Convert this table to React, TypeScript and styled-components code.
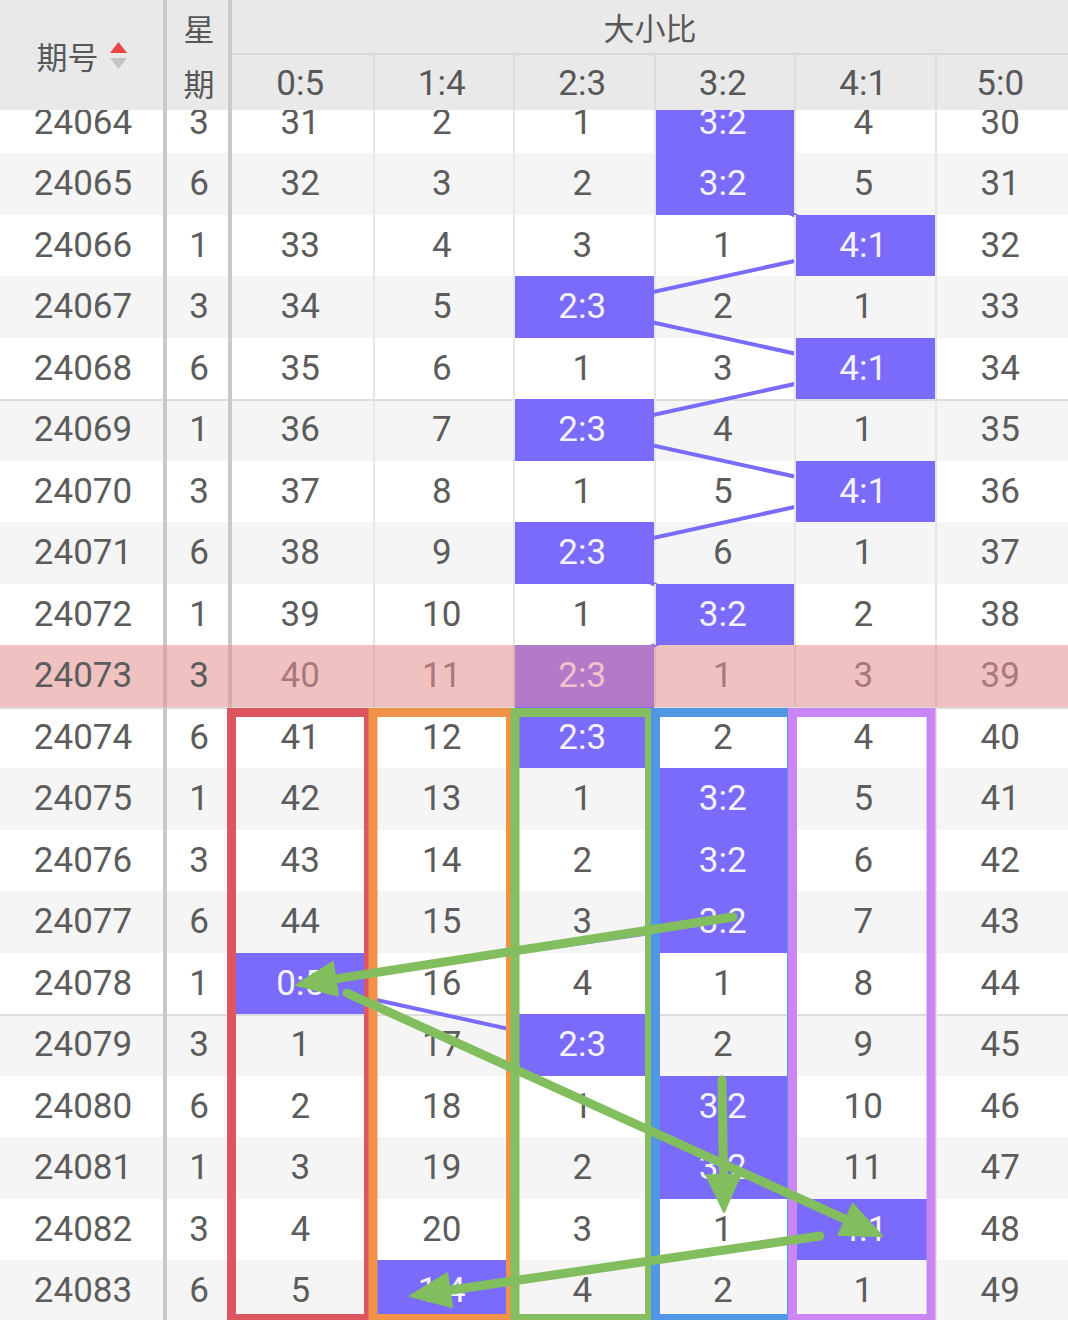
import React from 'react';
import styled, { createGlobalStyle } from 'styled-components';

const ROW_H = 61.5;
const COL_W = 140.5;
const DATA_X = 232;
const LABELS = ['0:5', '1:4', '2:3', '3:2', '4:1', '5:0'];

// issue, weekday, six cells ("*" marks the hit column)
const RAW: [string, number, string][] = [
  ['24064', 3, '31 2 1 * 4 30'],
  ['24065', 6, '32 3 2 * 5 31'],
  ['24066', 1, '33 4 3 1 * 32'],
  ['24067', 3, '34 5 * 2 1 33'],
  ['24068', 6, '35 6 1 3 * 34'],
  ['24069', 1, '36 7 * 4 1 35'],
  ['24070', 3, '37 8 1 5 * 36'],
  ['24071', 6, '38 9 * 6 1 37'],
  ['24072', 1, '39 10 1 * 2 38'],
  ['24073', 3, '40 11 * 1 3 39'],
  ['24074', 6, '41 12 * 2 4 40'],
  ['24075', 1, '42 13 1 * 5 41'],
  ['24076', 3, '43 14 2 * 6 42'],
  ['24077', 6, '44 15 3 * 7 43'],
  ['24078', 1, '* 16 4 1 8 44'],
  ['24079', 3, '1 17 * 2 9 45'],
  ['24080', 6, '2 18 1 * 10 46'],
  ['24081', 1, '3 19 2 * 11 47'],
  ['24082', 3, '4 20 3 1 * 48'],
  ['24083', 6, '5 * 4 2 1 49'],
];

const ROWS = RAW.map(([issue, week, cells]) => {
  const values = cells.split(' ');
  return { issue, week, values, hit: values.indexOf('*') };
});

const PINK_ISSUE = '24073';

const GlobalStyle = createGlobalStyle`
  *, *::before, *::after { box-sizing: border-box; }
  html, body { margin: 0; padding: 0; background: #ffffff; }
  body { font-family: Roboto, "Noto Sans CJK SC", sans-serif; }
`;

const Page = styled.div`
  position: relative;
  width: 1068px;
  height: 1320px;
  overflow: hidden;
  background: #ffffff;
  color: #5c5c5c;
  font-family: Roboto, "Noto Sans CJK SC", sans-serif;
`;

/* ---------- header ---------- */

const Header = styled.div`
  display: grid;
  grid-template-columns: 167px 65px 1fr;
  height: 110px;
  background: #e9e9e9;
  color: #585858;
`;

const HeadIssue = styled.div`
  display: flex;
  align-items: center;
  justify-content: center;
  gap: 11px;
  border-right: 4px solid #c9c9c9;
  font-family: "Noto Sans CJK SC", sans-serif;
  font-size: 31px;
  line-height: 1;
`;

const HeadWeek = styled.div`
  display: grid;
  grid-template-rows: 55px 55px;
  border-right: 4px solid #c9c9c9;
  padding-left: 3px;
`;

const WeekChar = styled.div`
  display: flex;
  align-items: center;
  justify-content: center;
  font-family: "Noto Sans CJK SC", sans-serif;
  font-size: 31px;
  line-height: 1;
`;

const HeadGroup = styled.div`
  display: grid;
  grid-template-rows: 55px 55px;
`;

const GroupTitle = styled.div`
  display: flex;
  align-items: center;
  justify-content: center;
  border-bottom: 2px solid #dadada;
  font-family: "Noto Sans CJK SC", sans-serif;
  font-size: 31px;
  line-height: 1;
`;

const SubRow = styled.div`
  display: grid;
  grid-template-columns: repeat(5, ${COL_W}px) 1fr;
`;

const SubCell = styled.div<{ $first: boolean }>`
  display: flex;
  align-items: center;
  justify-content: center;
  border-left: ${(p) => (p.$first ? 'none' : '2px solid #dcdcdc')};
  padding: 2px 4px 0 0;
  font-size: 35px;
  line-height: 1;
`;

const SortIcon = () => (
  <svg width="17" height="27" viewBox="0 0 17 27">
    <polygon points="8.5,0 17,11 0,11" fill="#ee4646" />
    <polygon points="0,16 17,16 8.5,27" fill="#c4c4c4" />
  </svg>
);

/* ---------- body ---------- */

const BodyViewport = styled.div`
  height: 1210px;
  overflow: hidden;
`;

const BodyInner = styled.div`
  position: relative;
  margin-top: -18.5px;
`;

type Tone = 'white' | 'gray' | 'pink';
const TONES: Record<Tone, string> = {
  white: '#ffffff',
  gray: '#f5f5f5',
  pink: '#f0c1c1',
};

const RowLine = styled.div<{ $tone: Tone; $groupStart: boolean }>`
  display: grid;
  grid-template-columns: 167px 65px repeat(5, ${COL_W}px) 1fr;
  height: ${ROW_H}px;
  background: ${(p) => TONES[p.$tone]};
  box-shadow: ${(p) => (p.$groupStart ? 'inset 0 2px 0 #dcdcdc' : 'none')};
`;

const FixedCell = styled.div<{ $pink: boolean }>`
  display: flex;
  align-items: center;
  justify-content: center;
  padding-left: 3px;
  border-right: 4px solid ${(p) => (p.$pink ? '#d8aaab' : '#c9c9c9')};
  font-size: 35px;
  line-height: 1;
  color: #5c5c5c;
`;

const DataCell = styled.div<{ $first: boolean; $hit: boolean; $pink: boolean }>`
  position: ${(p) => (p.$hit ? 'relative' : 'static')};
  z-index: ${(p) => (p.$hit ? 2 : 'auto')};
  display: flex;
  align-items: center;
  justify-content: center;
  padding-right: 4px;
  border-left: ${(p) =>
    p.$first ? 'none' : `2px solid ${p.$pink ? '#e3b4b5' : '#e6e6e6'}`};
  background: ${(p) =>
    p.$hit ? (p.$pink ? '#b27ac8' : '#7a6bfa') : 'transparent'};
  color: ${(p) =>
    p.$hit ? (p.$pink ? '#f2c2cc' : '#f4f2ff') : p.$pink ? '#aa7879' : '#5c5c5c'};
  font-size: 35px;
  line-height: 1;
`;

const TrendLayer = styled.svg`
  position: absolute;
  top: 0;
  left: 0;
  z-index: 1;
  pointer-events: none;
`;

/* ---------- hand-drawn markup over the chart ---------- */

const Markup = styled.svg`
  position: absolute;
  top: 0;
  left: 0;
  z-index: 10;
  pointer-events: none;
`;

const BOXES = [
  { x: 231.5, w: 137, color: '#dd555e' },
  { x: 373, w: 137.5, color: '#f09248' },
  { x: 515, w: 134.5, color: '#84be60' },
  { x: 655.5, w: 136, color: '#5296e6' },
  { x: 792.5, w: 138.5, color: '#ca86f5' },
];

const ARROWS = [
  { from: [733, 917], to: [296, 985], len: 40 },
  { from: [347, 993], to: [882, 1236], len: 40 },
  { from: [722, 1080], to: [724, 1212], len: 37 },
  { from: [820, 1236], to: [410, 1296], len: 40 },
];

const GREEN = '#82be5e';

function arrowParts(from: number[], to: number[], len: number, half = 17) {
  const dx = to[0] - from[0];
  const dy = to[1] - from[1];
  const d = Math.hypot(dx, dy);
  const ux = dx / d;
  const uy = dy / d;
  const bx = to[0] - ux * len;
  const by = to[1] - uy * len;
  const head = `${to[0]},${to[1]} ${bx - uy * half},${by + ux * half} ${bx + uy * half},${by - ux * half}`;
  return { bx, by, head };
}

const cx = (col: number) => DATA_X + col * COL_W + COL_W / 2;
const cy = (row: number) => row * ROW_H + ROW_H / 2;

export default function App() {
  return (
    <>
      <GlobalStyle />
      <Page>
        <Header>
          <HeadIssue>
            <span>期号</span>
            <SortIcon />
          </HeadIssue>
          <HeadWeek>
            <WeekChar>星</WeekChar>
            <WeekChar>期</WeekChar>
          </HeadWeek>
          <HeadGroup>
            <GroupTitle>大小比</GroupTitle>
            <SubRow>
              {LABELS.map((l, i) => (
                <SubCell key={l} $first={i === 0}>
                  {l}
                </SubCell>
              ))}
            </SubRow>
          </HeadGroup>
        </Header>

        <BodyViewport>
          <BodyInner>
            {ROWS.map((r, i) => {
              const pink = r.issue === PINK_ISSUE;
              const tone: Tone = pink ? 'pink' : i % 2 === 1 ? 'gray' : 'white';
              return (
                <RowLine key={r.issue} $tone={tone} $groupStart={i > 0 && i % 5 === 0}>
                  <FixedCell $pink={pink}>{r.issue}</FixedCell>
                  <FixedCell $pink={pink}>{r.week}</FixedCell>
                  {r.values.map((v, j) => (
                    <DataCell key={j} $first={j === 0} $hit={j === r.hit} $pink={pink}>
                      {j === r.hit ? LABELS[j] : v}
                    </DataCell>
                  ))}
                </RowLine>
              );
            })}
            <TrendLayer width={1068} height={ROWS.length * ROW_H}>
              {ROWS.slice(1).map((r, i) => {
                const prev = ROWS[i];
                if (prev.hit === r.hit) return null;
                return (
                  <line
                    key={r.issue}
                    x1={cx(prev.hit)}
                    y1={cy(i)}
                    x2={cx(r.hit)}
                    y2={cy(i + 1)}
                    stroke="#7a6bfa"
                    strokeWidth={4}
                  />
                );
              })}
            </TrendLayer>
          </BodyInner>
        </BodyViewport>

        <Markup width={1068} height={1320}>
          {BOXES.map((b) => (
            <rect
              key={b.color}
              x={b.x}
              y={712.5}
              width={b.w}
              height={606}
              fill="none"
              stroke={b.color}
              strokeWidth={9}
            />
          ))}
          {ARROWS.map((a, i) => {
            const { bx, by, head } = arrowParts(a.from, a.to, a.len);
            return (
              <g key={i}>
                <line
                  x1={a.from[0]}
                  y1={a.from[1]}
                  x2={bx}
                  y2={by}
                  stroke={GREEN}
                  strokeWidth={9}
                  strokeLinecap="round"
                />
                <polygon points={head} fill={GREEN} stroke={GREEN} strokeWidth={2} strokeLinejoin="round" />
              </g>
            );
          })}
        </Markup>
      </Page>
    </>
  );
}
